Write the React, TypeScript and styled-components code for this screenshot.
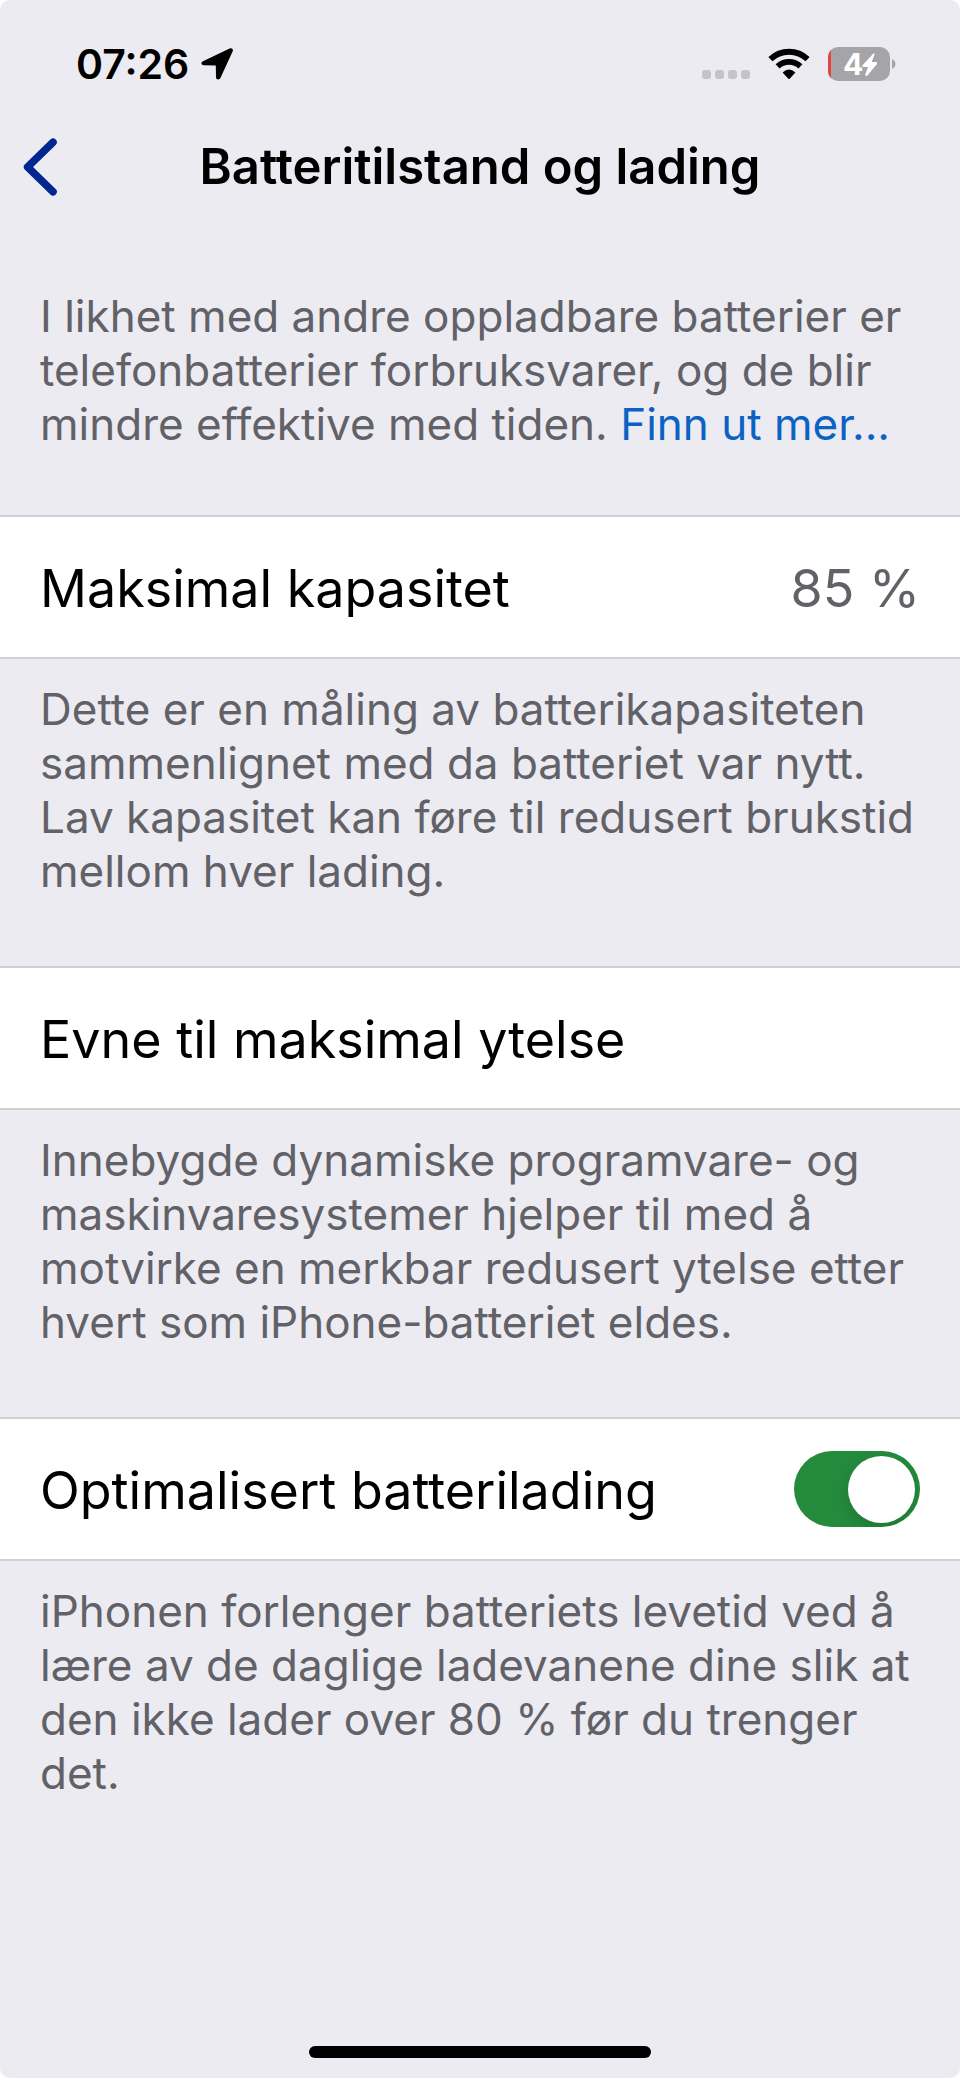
import React, { useState } from "react";
import styled, { createGlobalStyle } from "styled-components";

const color = {
  page: "#ebebf1",
  surface: "#ffffff",
  line: "#d0d0d4",
  text: "#000000",
  secondary: "#616167",
  link: "#0b62c4",
  back: "#00278f",
  on: "#248b3d",
  off: "#8e8e93",
  battery: "#a5a5a9",
  muted: "#c3c3c8",
  low: "#e5443a",
};

const GlobalStyle = createGlobalStyle`
  *, *::before, *::after { box-sizing: border-box; }
  body {
    margin: 0;
    background: #ffffff;
    color: ${color.text};
    font-family: Inter, "Liberation Sans", sans-serif;
  }
`;

const Screen = styled.div`
  display: flex;
  flex-direction: column;
  min-height: 100vh;
  background: ${color.page};
  border-radius: 10px;
`;

const StatusBar = styled.div`
  display: flex;
  align-items: center;
  justify-content: space-between;
  height: 128px;
  padding: 0 64px 0 76px;
`;

const StatusGroup = styled.div<{ $gap: number }>`
  display: flex;
  align-items: center;
  gap: ${(p) => p.$gap}px;
`;

const Clock = styled.time`
  font-size: 41px;
  line-height: 52px;
  font-weight: 600;
`;

const SignalDots = styled.div`
  display: flex;
  gap: 4px;
  padding-top: 20px;
`;

const Dot = styled.span`
  width: 9px;
  height: 9px;
  border-radius: 3px;
  background: ${color.muted};
`;

const NavBar = styled.header`
  display: grid;
  grid-template-columns: 80px 1fr 80px;
  align-items: center;
  height: 78px;
`;

const BackButton = styled.button`
  display: flex;
  align-items: center;
  height: 78px;
  padding: 0 0 0 23px;
  border: 0;
  background: none;
  cursor: pointer;
`;

const Title = styled.h1`
  margin: 0;
  text-align: center;
  white-space: nowrap;
  font-size: 49px;
  line-height: 60px;
  font-weight: 600;
`;

const Content = styled.main`
  flex: 1;
`;

const Note = styled.p<{ $intro?: boolean }>`
  margin: 0;
  padding: ${(p) => (p.$intro ? "83px 40px 64px" : "23px 40px 68px")};
  color: ${color.secondary};
  font-size: 44px;
  line-height: 54px;
`;

const NoteLink = styled.a`
  color: ${color.link};
  text-decoration: none;
`;

const Row = styled.div`
  display: flex;
  align-items: center;
  justify-content: space-between;
  min-height: 144px;
  padding: 0 40px;
  background: ${color.surface};
  border: solid ${color.line};
  border-width: 2px 0;
  font-size: 52px;
  line-height: 68px;
`;

const RowText = styled.span<{ $secondary?: boolean }>`
  padding-top: 4px;
  color: ${(p) => (p.$secondary ? color.secondary : color.text)};
`;

const Switch = styled.input`
  appearance: none;
  display: flex;
  align-items: center;
  justify-content: ${(p) => (p.checked ? "flex-end" : "flex-start")};
  flex: none;
  width: 126px;
  height: 76px;
  margin: 0;
  padding: 0 5px;
  border-radius: 38px;
  background: ${(p) => (p.checked ? color.on : color.off)};
  overflow: hidden;
  cursor: pointer;

  &::before {
    content: "";
    width: 67px;
    height: 67px;
    border-radius: 50%;
    background: ${color.surface};
    box-shadow: 0 6px 16px rgba(0, 0, 0, 0.15);
  }
`;

const HomeArea = styled.footer`
  display: flex;
  justify-content: center;
  padding-bottom: 20px;
`;

const HomeIndicator = styled.div`
  width: 342px;
  height: 12px;
  border-radius: 6px;
  background: ${color.text};
`;

const LocationIcon = () => (
  <svg width="32" height="32" viewBox="0 0 32 32" aria-hidden="true">
    <path
      d="M2 13.2 L28.6 0.6 C30.8 -0.4 32.6 1.2 31.6 3.4 L19.4 30 C18.4 32.2 15 31.8 15 29.2 L14.8 17.6 L2.8 17.2 C0 17 -0.4 14.3 2 13.2 Z"
      fill="#000"
    />
  </svg>
);

const WifiIcon = () => (
  <svg width="42" height="32" viewBox="0 0 42 32" aria-hidden="true">
    <g fill="none" stroke="#000" strokeWidth="5.8">
      <path d="M2.4 11.2 A27 27 0 0 1 39.6 11.2" />
      <path d="M9.6 18.4 A16.6 16.6 0 0 1 32.4 18.4" />
    </g>
    <path d="M14.6 24.6 Q21 18.6 27.4 24.6 L21.9 30.4 Q21 31.4 20.1 30.4 Z" fill="#000" />
  </svg>
);

const BatteryIcon = () => (
  <svg width="68" height="34" viewBox="0 0 68 34" role="img" aria-label="4 %">
    <defs>
      <clipPath id="battery-body">
        <rect width="62" height="34" rx="10" />
      </clipPath>
    </defs>
    <g clipPath="url(#battery-body)">
      <rect width="62" height="34" fill={color.battery} />
      <rect width="3" height="34" fill={color.low} />
    </g>
    <path d="M64 12 Q67.4 13.6 67.4 17 Q67.4 20.4 64 22 Z" fill={color.battery} />
    <text x="15" y="28" fill="#fff" fontFamily="Inter, sans-serif" fontSize="30" fontWeight="700">
      4
    </text>
    <path
      d="M45.4 6.4 L34.4 18.2 Q33.6 20 35.4 20 L40 20 L37.2 27.8 Q37.4 29.8 39.4 28.6 L49 17 Q49.6 15.2 48 15 L43.6 15 L46.6 7.4 Q46.8 5.6 45.4 6.4 Z"
      fill="#fff"
    />
  </svg>
);

const BackIcon = () => (
  <svg width="36" height="58" viewBox="0 0 36 58" aria-hidden="true">
    <path
      d="M30 4.2 L4.6 29 L30 53.8"
      fill="none"
      stroke={color.back}
      strokeWidth="7.6"
      strokeLinecap="round"
      strokeLinejoin="round"
    />
  </svg>
);

export default function App() {
  const [optimized, setOptimized] = useState(true);

  return (
    <>
      <GlobalStyle />
      <Screen>
        <StatusBar>
          <StatusGroup $gap={12}>
            <Clock>07:26</Clock>
            <LocationIcon />
          </StatusGroup>
          <StatusGroup $gap={18}>
            <SignalDots>
              <Dot />
              <Dot />
              <Dot />
              <Dot />
            </SignalDots>
            <WifiIcon />
            <BatteryIcon />
          </StatusGroup>
        </StatusBar>
        <NavBar>
          <BackButton type="button" aria-label="Tilbake">
            <BackIcon />
          </BackButton>
          <Title>Batteritilstand og lading</Title>
        </NavBar>
        <Content>
          <Note $intro>
            I likhet med andre oppladbare batterier er telefonbatterier forbruksvarer, og de blir
            mindre effektive med tiden. <NoteLink href="#mer">Finn ut mer...</NoteLink>
          </Note>

          <Row>
            <RowText>Maksimal kapasitet</RowText>
            <RowText $secondary>85 %</RowText>
          </Row>
          <Note>
            Dette er en måling av batterikapasiteten sammenlignet med da batteriet var nytt. Lav
            kapasitet kan føre til redusert brukstid mellom hver lading.
          </Note>

          <Row>
            <RowText>Evne til maksimal ytelse</RowText>
          </Row>
          <Note>
            Innebygde dynamiske programvare- og maskinvaresystemer hjelper til med å motvirke en
            merkbar redusert ytelse etter hvert som iPhone-batteriet eldes.
          </Note>

          <Row>
            <RowText as="label" htmlFor="optimized">
              Optimalisert batterilading
            </RowText>
            <Switch
              id="optimized"
              type="checkbox"
              role="switch"
              checked={optimized}
              onChange={(e) => setOptimized(e.target.checked)}
            />
          </Row>
          <Note>
            iPhonen forlenger batteriets levetid ved å lære av de daglige ladevanene dine slik at
            den ikke lader over 80 % før du trenger det.
          </Note>
        </Content>
        <HomeArea>
          <HomeIndicator />
        </HomeArea>
      </Screen>
    </>
  );
}
